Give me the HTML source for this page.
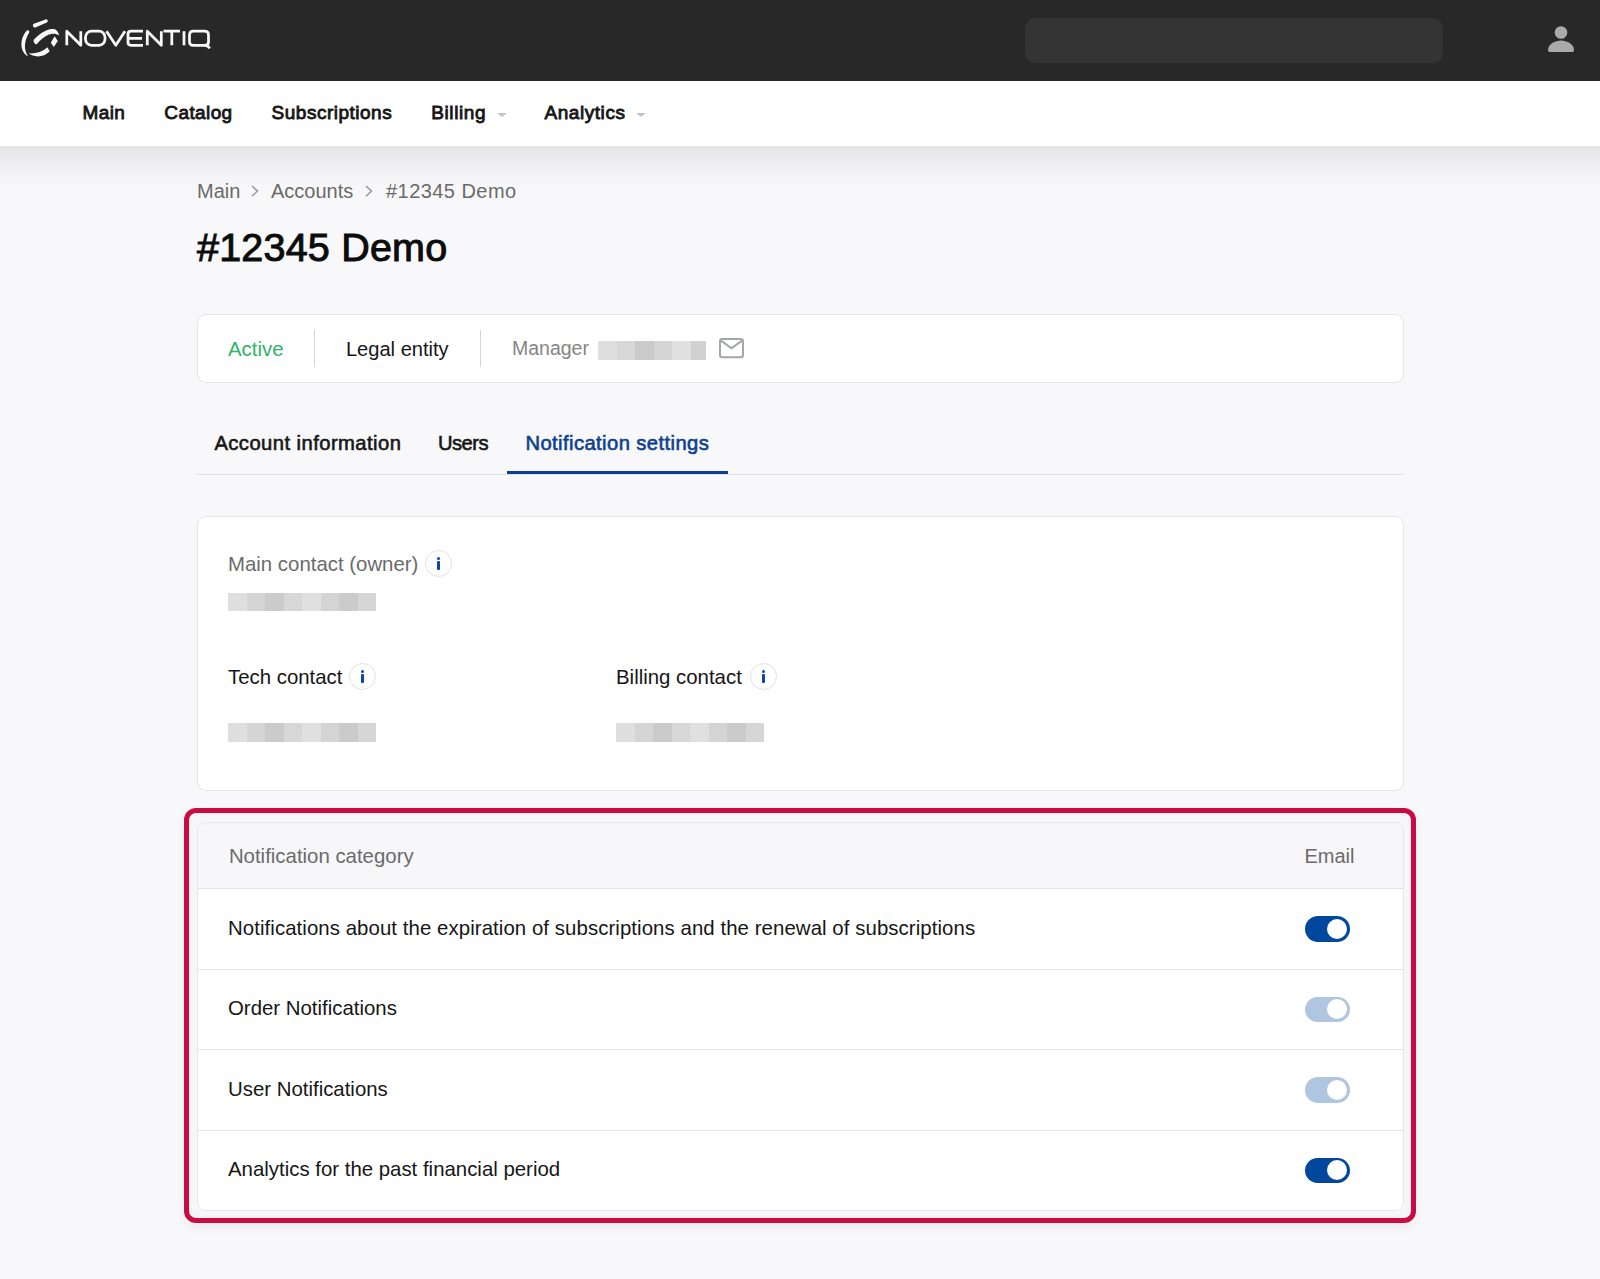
<!DOCTYPE html>
<html><head><meta charset="utf-8">
<style>
*{margin:0;padding:0;box-sizing:border-box}
html,body{width:1600px;height:1279px;overflow:hidden}
body{background:#f8f8fa;font-family:"Liberation Sans",sans-serif;position:relative;color:#161616}
.a{position:absolute;white-space:nowrap;line-height:1}
#hdr{position:absolute;left:0;top:0;width:1600px;height:80.5px;background:#282828}
#search{position:absolute;left:1025px;top:17.5px;width:418px;height:45.5px;background:#343434;border-radius:10px}
#nav{position:absolute;left:0;top:80px;width:1600px;height:66px;background:#fff;z-index:-1}
#navshadow{position:absolute;left:0;top:146px;width:1600px;height:46px;background:linear-gradient(#e5e5e8,#eeeef1 35%,#f6f6f8 75%,#f8f8fa)}
.nv{font-size:19px;color:#161616;-webkit-text-stroke:0.85px #161616;letter-spacing:0.4px}
.caret{position:absolute;width:0;height:0;border-left:5px solid transparent;border-right:5px solid transparent;border-top:4.5px solid #c4c4c4}
.bc{font-size:20px;color:#6a6a6a}
.card{position:absolute;background:#fff;border:1.5px solid #e6e6e8;border-radius:9px}
.div{position:absolute;width:1.5px;background:#d5d5d5}
.px{position:absolute;display:flex;height:18.5px}
.px i{display:block;width:18.5px;height:100%}
.tab{font-size:20.2px;color:#161616;-webkit-text-stroke:0.6px currentColor;letter-spacing:0.3px}
.info{position:absolute;width:27px;height:27px;border:1.3px solid #e2e2e2;border-radius:50%;background:#fff}
.info:before{content:"";position:absolute;left:11.2px;top:6.2px;width:3px;height:3px;border-radius:50%;background:#0b47a1}
.info:after{content:"";position:absolute;left:11.4px;top:9.6px;width:2.5px;height:9.5px;border-radius:1px;background:#0b47a1}
.t20{font-size:20.4px}
.tog{position:absolute;left:1304.5px;width:45px;height:25.5px;border-radius:13px;background:#02479e}
.tog:after{content:"";position:absolute;right:2.5px;top:2.6px;width:20.3px;height:20.3px;border-radius:50%;background:#fff}
.tog.l{background:#b0c5df}
.row{position:absolute;left:0;width:100%;border-top:1.5px solid #e4e4e6}
</style></head>
<body>
<div id="hdr">
  <svg style="position:absolute;left:0;top:0" width="230" height="80" viewBox="0 0 230 80">
    <g fill="#f8f8f8">
      <path d="M33.8 23.8 L45.6 19.4 C47.6 18.8 48.6 21.6 46.8 22.5 L35.4 27.4 C33.2 28.2 31.9 24.7 33.8 23.8 Z"/>
      <path d="M27.2 30.2 C28.6 29.9 29.8 31 29.2 32.6 C25.6 38.5 24.2 45 25.4 50 C25.9 52.6 26.9 54.6 28.3 56.4 C23.8 54.4 21.3 49.5 21.4 44.2 C21.5 38.8 23.8 33.5 27.2 30.2 Z"/>
      <path d="M33.9 39.6 C39.5 34 46 29.6 52 29.1 C55.5 28.9 58 30.6 59.2 35.4 C56 33.2 52.5 33.2 49 34.6 C45 36.3 40.5 39.8 37 43.9 C35.6 45.6 32.6 41.8 33.9 39.6 Z"/>
      <path d="M28.6 53.3 C33.5 57.2 43 58.3 49.7 51.3 L47.3 47.2 C42.5 52 35.5 53.8 28.6 53.3 Z"/>
      <path d="M54.6 36.3 L57.8 41 L53.8 46.9 L50.8 42.7 Z"/>
    </g>
    <g fill="none" stroke="#f8f8f8" stroke-width="2.75" stroke-linejoin="round" stroke-linecap="butt">
      <path d="M66.8 45.3 V31.2 L80.8 45.3 V31.2"/>
      <rect x="85.5" y="31.2" width="19.5" height="14.1" rx="6"/>
      <path d="M106.5 31.2 L115.8 45.3 L125 31.2"/>
      <path d="M143 31.2 H131 Q128 31.2 128 34.2 V42.3 Q128 45.3 131 45.3 H143 M128.5 38.3 H142"/>
      <path d="M147.3 45.3 V31.2 L161.3 45.3 V31.2"/>
      <path d="M163.5 31.2 H180 M171.8 31.2 V45.3"/>
      <path d="M184 31.2 V45.3"/>
      <path d="M207 45.3 H193.5 Q189.5 45.3 189.5 42 V35.2 Q189.5 31.2 193.5 31.2 H204.5 Q208.5 31.2 208.5 35.2 V42 Q208.5 45.3 204.5 45.3 M204 45.3 Q208.5 45.3 209.5 48.5"/>
    </g>
  </svg>
  <div id="search"></div>
  <svg style="position:absolute;left:1546px;top:24px" width="30" height="30" viewBox="0 0 30 30">
    <circle cx="15" cy="8.5" r="6.3" fill="#a9aaa9"/>
    <path d="M2 26.2 C2 20.2 9 16.6 15 16.6 C21 16.6 28 20.2 28 26.2 Q28 28 26.2 28 H3.8 Q2 28 2 26.2 Z" fill="#a9aaa9"/>
  </svg>
</div>
<div id="nav">
  <div class="a nv" style="left:82.5px;top:23.2px">Main</div>
  <div class="a nv" style="left:164.3px;top:23.2px">Catalog</div>
  <div class="a nv" style="left:271.6px;top:23.2px;letter-spacing:0.5px">Subscriptions</div>
  <div class="a nv" style="left:431.25px;top:23.2px;letter-spacing:0.6px">Billing</div>
  <div class="caret" style="left:497px;top:33px"></div>
  <div class="a nv" style="left:544.5px;top:23.2px;letter-spacing:0.55px">Analytics</div>
  <div class="caret" style="left:636px;top:33px"></div>
</div>
<div id="navshadow"></div>

<div class="a bc" style="left:197px;top:180.5px">Main</div>
<svg style="position:absolute;left:250px;top:184px" width="10" height="14"><path d="M2 2 L7.5 7.1 L2 12.2" fill="none" stroke="#9a9a9a" stroke-width="1.5"/></svg>
<div class="a bc" style="left:271px;top:180.5px">Accounts</div>
<svg style="position:absolute;left:364px;top:184px" width="10" height="14"><path d="M2 2 L7.5 7.1 L2 12.2" fill="none" stroke="#9a9a9a" stroke-width="1.5"/></svg>
<div class="a bc" style="left:386px;top:180.5px;letter-spacing:0.45px">#12345 Demo</div>

<div class="a" style="left:197px;top:228px;font-size:39.5px;color:#0c0c0c;-webkit-text-stroke:1px #0c0c0c;letter-spacing:0.2px">#12345 Demo</div>

<div class="card" style="left:196.5px;top:313.5px;width:1207px;height:69.5px"></div>
<div class="a t20" style="left:228px;top:338.5px;color:#30b36b">Active</div>
<div class="div" style="left:313.5px;top:329.5px;height:37.5px"></div>
<div class="a t20" style="left:345.9px;top:338.5px;font-size:20.1px">Legal entity</div>
<div class="div" style="left:479.5px;top:329.5px;height:37.5px"></div>
<div class="a t20" style="left:512px;top:338.5px;color:#858585;font-size:19.5px">Manager</div>
<div class="px" style="left:598px;top:341px"><i style="background:#dedede"></i><i style="background:#d7d7d7"></i><i style="background:#cacaca"></i><i style="background:#d5d5d5"></i><i style="background:#e0e0e0"></i><i style="background:#d1d1d1;width:15px"></i></div>
<svg style="position:absolute;left:718px;top:337px" width="27" height="23" viewBox="0 0 27 23"><rect x="2" y="2" width="23" height="18.2" rx="2.3" fill="none" stroke="#a5a7a7" stroke-width="2"/><path d="M3 3.6 L13.5 11.2 L24 3.6" fill="none" stroke="#a5a7a7" stroke-width="2"/></svg>

<div class="a tab" style="left:214.4px;top:432.5px;letter-spacing:0.45px">Account information</div>
<div class="a tab" style="left:438px;top:432.5px;letter-spacing:-0.55px">Users</div>
<div class="a tab" style="left:525.4px;top:432.5px;color:#0e3f8e;letter-spacing:0.42px">Notification settings</div>
<div style="position:absolute;left:196px;top:473.5px;width:1208px;height:1.5px;background:#e2e2e4"></div>
<div style="position:absolute;left:507px;top:471px;width:221px;height:3px;background:#0b3f92"></div>

<div class="card" style="left:196.5px;top:516px;width:1207px;height:274.5px"></div>
<div class="a t20" style="left:228px;top:554px;color:#6b6b6b">Main contact (owner)</div>
<div class="info" style="left:424.8px;top:550px"></div>
<div class="px" style="left:228px;top:592.5px"><i style="background:#dfdfdf"></i><i style="background:#d5d5d5"></i><i style="background:#cbcbcb"></i><i style="background:#d7d7d7"></i><i style="background:#e0e0e0"></i><i style="background:#d4d4d4"></i><i style="background:#cbcbcb"></i><i style="background:#d6d6d6"></i></div>
<div class="a t20" style="left:228px;top:667px">Tech contact</div>
<div class="info" style="left:349.1px;top:663.2px"></div>
<div class="px" style="left:228px;top:723px"><i style="background:#dfdfdf"></i><i style="background:#d5d5d5"></i><i style="background:#cbcbcb"></i><i style="background:#d7d7d7"></i><i style="background:#e0e0e0"></i><i style="background:#d4d4d4"></i><i style="background:#cbcbcb"></i><i style="background:#d6d6d6"></i></div>
<div class="a t20" style="left:616px;top:667px">Billing contact</div>
<div class="info" style="left:749.8px;top:663.2px"></div>
<div class="px" style="left:616.4px;top:723px"><i style="background:#dfdfdf"></i><i style="background:#d5d5d5"></i><i style="background:#cbcbcb"></i><i style="background:#d7d7d7"></i><i style="background:#e0e0e0"></i><i style="background:#d4d4d4"></i><i style="background:#cbcbcb"></i><i style="background:#d6d6d6"></i></div>

<div style="position:absolute;left:184px;top:808px;width:1232px;height:414.5px;border:5px solid #c80b42;border-radius:12px;background:#f7f6f8;box-shadow:0 4px 10px rgba(0,0,0,0.06), inset 0 0 6px rgba(60,0,20,0.05)"></div>
<div class="card" style="left:197px;top:822px;width:1207px;height:389px;overflow:hidden">
  <div style="position:absolute;left:0;top:0;width:100%;height:65px;background:#f7f7f9"></div>
  <div class="row" style="top:65px;height:80.5px;background:#fff"></div>
  <div class="row" style="top:145.5px;height:80.5px;background:#fff"></div>
  <div class="row" style="top:226px;height:80.5px;background:#fff"></div>
  <div class="row" style="top:306.5px;height:82px;background:#fff"></div>
</div>
<div class="a t20" style="left:228.9px;top:845.5px;color:#6b6b6b">Notification category</div>
<div class="a t20" style="left:1304.5px;top:845.5px;color:#6b6b6b;font-size:20px">Email</div>
<div class="a t20" style="left:228px;top:917.5px;letter-spacing:0.07px">Notifications about the expiration of subscriptions and the renewal of subscriptions</div>
<div class="tog" style="top:916px"></div>
<div class="a t20" style="left:228px;top:998px">Order Notifications</div>
<div class="tog l" style="top:996.5px"></div>
<div class="a t20" style="left:228px;top:1078.5px">User Notifications</div>
<div class="tog l" style="top:1077px"></div>
<div class="a t20" style="left:228px;top:1159px">Analytics for the past financial period</div>
<div class="tog" style="top:1157.5px"></div>
</body></html>
